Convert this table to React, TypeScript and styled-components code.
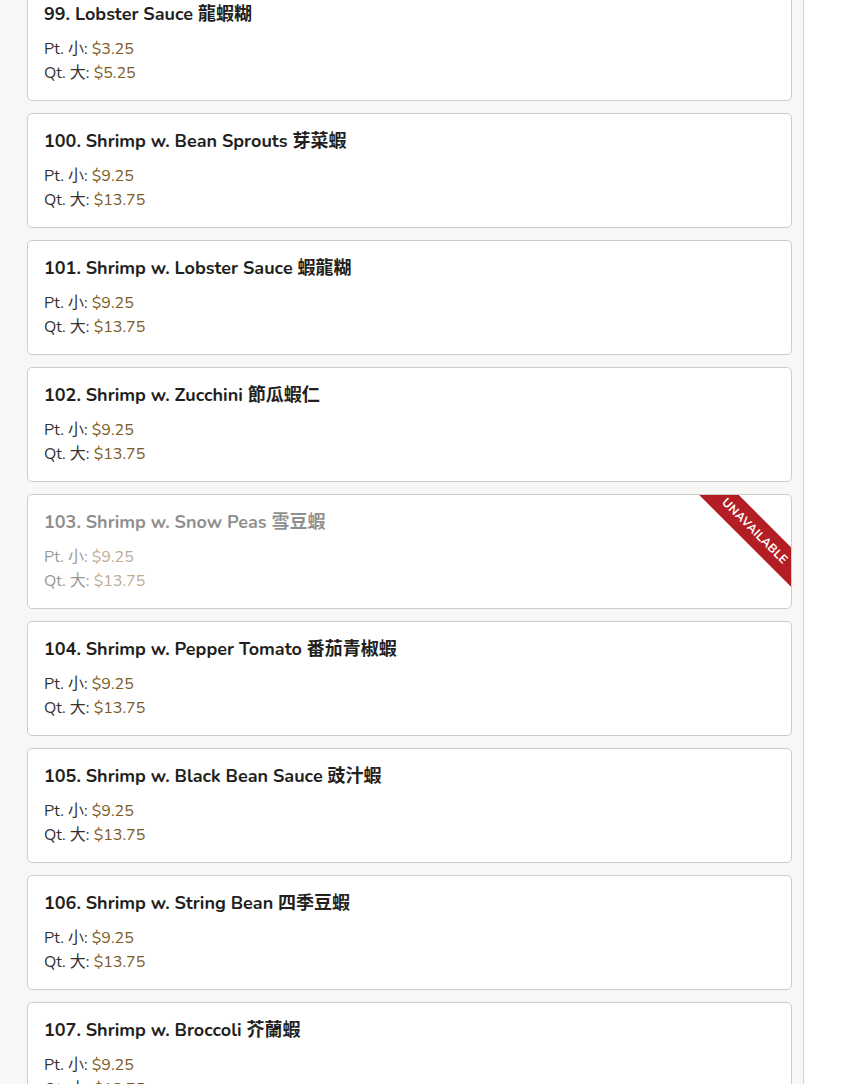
import React from 'react'
import styled, { createGlobalStyle } from 'styled-components'

const GlobalStyle = createGlobalStyle`
  body {
    margin: 0;
    background: #ffffff;
    font-family: 'Nunito', 'Lato', 'Noto Sans CJK TC', sans-serif;
    overflow: hidden;
  }
`

const Page = styled.div`
  width: 765px;
  min-height: 1100px;
  margin-top: -14px;
  padding: 0 11px 0 27px;
  background: #f8f7f5;
  border-right: 1px solid #d2d2d2;
  display: flex;
  flex-direction: column;
  gap: 12px;
`

const Card = styled.div`
  position: relative;
  overflow: hidden;
  box-sizing: border-box;
  width: 765px;
  height: 115px;
  padding: 16px 16px 0;
  background: #fff;
  border: 1px solid #cdcdcd;
  border-radius: 5px;
`

const Content = styled.div<{ $off?: boolean }>`
  opacity: ${(p) => (p.$off ? 0.5 : 1)};
`

const Title = styled.h3`
  margin: 0 0 12px;
  font-size: 18px;
  font-weight: 700;
  line-height: 22px;
  color: #231f1c;
`

const PriceLine = styled.div`
  font-size: 16px;
  line-height: 24px;
  color: #333;
`

const Price = styled.span`
  color: #7d5b1f;
`

const Ribbon = styled.div`
  position: absolute;
  top: 22px;
  right: -39px;
  width: 150px;
  height: 28px;
  line-height: 28px;
  background: #b31e24;
  color: #fff;
  font-size: 12px;
  font-weight: 700;
  letter-spacing: 0.3px;
  text-align: center;
  text-transform: uppercase;
  transform: rotate(45deg);
`

type Dish = { no: number; name: string; zh: string; pt: string; qt: string; off?: boolean }

const dishes: Dish[] = [
  { no: 99, name: 'Lobster Sauce', zh: '龍蝦糊', pt: '$3.25', qt: '$5.25' },
  { no: 100, name: 'Shrimp w. Bean Sprouts', zh: '芽菜蝦', pt: '$9.25', qt: '$13.75' },
  { no: 101, name: 'Shrimp w. Lobster Sauce', zh: '蝦龍糊', pt: '$9.25', qt: '$13.75' },
  { no: 102, name: 'Shrimp w. Zucchini', zh: '節瓜蝦仁', pt: '$9.25', qt: '$13.75' },
  { no: 103, name: 'Shrimp w. Snow Peas', zh: '雪豆蝦', pt: '$9.25', qt: '$13.75', off: true },
  { no: 104, name: 'Shrimp w. Pepper Tomato', zh: '番茄青椒蝦', pt: '$9.25', qt: '$13.75' },
  { no: 105, name: 'Shrimp w. Black Bean Sauce', zh: '豉汁蝦', pt: '$9.25', qt: '$13.75' },
  { no: 106, name: 'Shrimp w. String Bean', zh: '四季豆蝦', pt: '$9.25', qt: '$13.75' },
  { no: 107, name: 'Shrimp w. Broccoli', zh: '芥蘭蝦', pt: '$9.25', qt: '$13.75' },
]

const App = () => {
  return (
    <>
      <GlobalStyle />
      <Page>
        {dishes.map((d) => (
          <Card key={d.no}>
            <Content $off={d.off}>
              <Title>{`${d.no}. ${d.name} ${d.zh}`}</Title>
              <PriceLine>
                Pt. 小: <Price>{d.pt}</Price>
              </PriceLine>
              <PriceLine>
                Qt. 大: <Price>{d.qt}</Price>
              </PriceLine>
            </Content>
            {d.off && <Ribbon>Unavailable</Ribbon>}
          </Card>
        ))}
      </Page>
    </>
  )
}

export default App
